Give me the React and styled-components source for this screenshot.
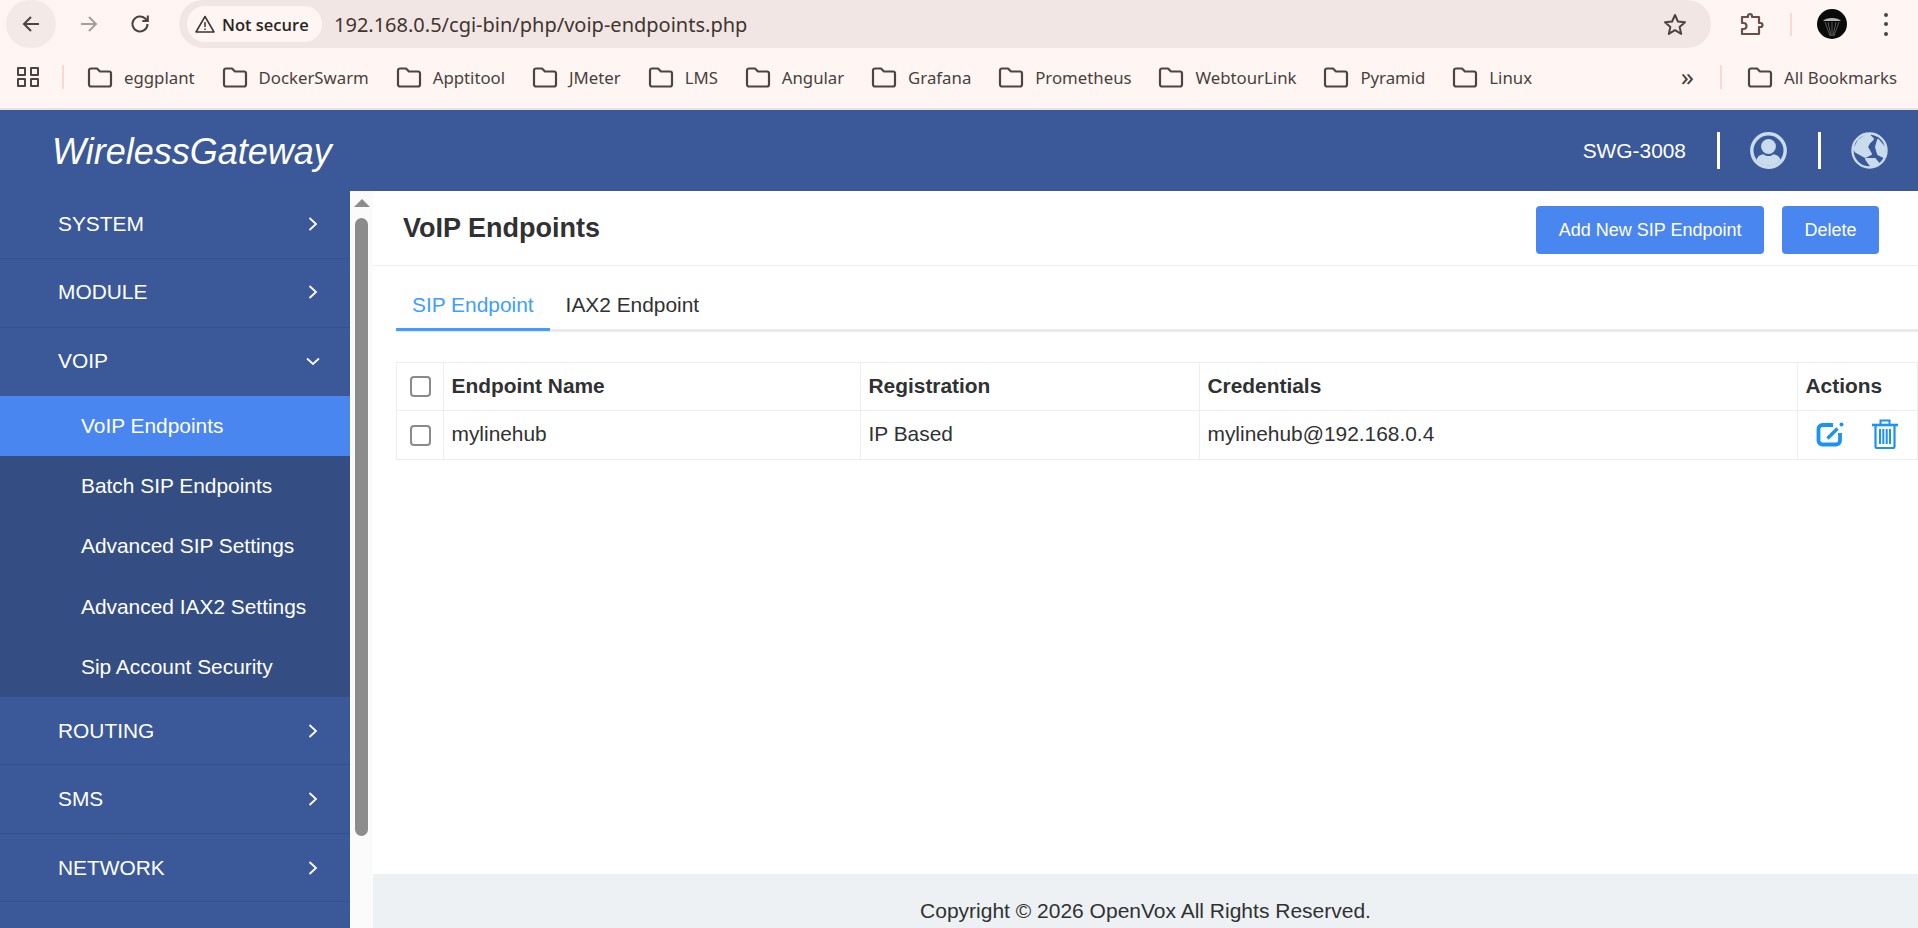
import React from 'react';
import styled, { createGlobalStyle } from 'styled-components';

const GlobalStyle = createGlobalStyle`
  html, body {
    margin: 0;
    height: 100%;
    overflow: hidden;
    background: #fff;
    font-family: "Liberation Sans", Arial, sans-serif;
  }
  * { box-sizing: border-box; }
`;

const bookmarks = ['eggplant', 'DockerSwarm', 'Apptitool', 'JMeter', 'LMS', 'Angular', 'Grafana', 'Prometheus', 'WebtourLink', 'Pyramid', 'Linux'];
const subItems = ['VoIP Endpoints', 'Batch SIP Endpoints', 'Advanced SIP Settings', 'Advanced IAX2 Settings', 'Sip Account Security'];

const FolderIcon = () => (
  <svg width="26" height="22" viewBox="0 0 26 22" fill="none" stroke="#4f4240" strokeWidth="2.2" strokeLinejoin="round">
    <path d="M2 4.5a2 2 0 0 1 2-2h6l3 3h9a2 2 0 0 1 2 2v11a2 2 0 0 1-2 2H4a2 2 0 0 1-2-2z" />
  </svg>
);

const Chevron = ({ down }) => (
  <svg width="16" height="16" viewBox="0 0 16 16" fill="none" stroke="#fff" strokeWidth="1.8">
    <path d={down ? 'M2 5.5l6 5.5 6-5.5' : 'M4.5 2l6.5 6-6.5 6'} />
  </svg>
);

const UserIcon = () => (
  <svg width="37" height="37" viewBox="0 0 37 37" fill="#c9dcee">
    <circle cx="18.5" cy="18.5" r="16.7" fill="none" stroke="#c9dcee" strokeWidth="3.4" />
    <circle cx="18.5" cy="14.5" r="7.4" />
    <path d="M6.500 28c1-3.800 4-5.500 7-5.800 1.500 1.300 3.200 1.800 5 1.800s3.500-.5 5-1.800c3 .3 6 2 7 5.800a15.500 15.500 0 0 1-24 0z" />
  </svg>
);

const GlobeIcon = () => (
  <svg width="37" height="37" viewBox="0 0 37 37" fill="#c9dcee" stroke="#c9dcee" strokeLinejoin="round">
    <circle cx="18.5" cy="18.5" r="17" fill="none" strokeWidth="2.400" />
    <path d="M3 17L8 8l9-6 5 5-4 4-2 4 4 7-6 3-9-5z" strokeWidth="2" />
    <path d="M15 27l9 0 4 5-8 2-3-4z" strokeWidth="2" />
    <path d="M27 8l7 8-1 9-6-3-2-7z" strokeWidth="2" />
  </svg>
);

const EditIcon = () => (
  <svg width="29" height="25" viewBox="0 0 29 25" fill="none" stroke="#1c92f2">
    <path d="M17 3H6.500a4 4 0 0 0-4 4v11.500a4 4 0 0 0 4 4H20a4 4 0 0 0 4-4V11" strokeWidth="3.800" />
    <path d="M11.500 16.500L21.500 6.500" strokeWidth="3.400" />
    <circle cx="25.500" cy="2.500" r="2" fill="#1c92f2" stroke="none" />
  </svg>
);

const TrashIcon = () => (
  <svg width="26" height="30" viewBox="0 0 26 30" fill="none" stroke="#1c92f2">
    <path d="M0 6h26" strokeWidth="2.600" />
    <path d="M8.500 5V1.500h9V5" strokeWidth="2" />
    <path d="M3.500 7v20.500a1.500 1.500 0 0 0 1.500 1.500h16a1.500 1.500 0 0 0 1.500-1.500V7" strokeWidth="2.200" />
    <path d="M8 10v15M11.300 10v15M14.700 10v15M18 10v15" strokeWidth="2" />
  </svg>
);

const BackArrow = ({ color }) => (
  <svg width="20" height="20" viewBox="0 0 20 20" fill="none" stroke={color} strokeWidth="2">
    <path d="M18 10H3M10 3l-7 7 7 7" />
  </svg>
);

export default function App() {
  return (
    <Page>
      <GlobalStyle />
      <Toolbar>
        <BackButton><BackArrow color="#4f4240" /></BackButton>
        <NavButton dim><Flip><BackArrow color="#a89d9b" /></Flip></NavButton>
        <NavButton>
          <svg width="22" height="22" viewBox="0 0 22 22" fill="none" stroke="#4f4240" strokeWidth="2.100">
            <path d="M18.500 11a7.500 7.500 0 1 1-2.300-5.400L18.500 8" />
            <path d="M18.800 2.500V8h-5.500" />
          </svg>
        </NavButton>
        <Omnibox>
          <SecurityChip>
            <svg width="20" height="18" viewBox="0 0 20 18" fill="none" stroke="#3c3230" strokeWidth="1.500" strokeLinejoin="round">
              <path d="M10 1.500L19 17H1z" />
              <path d="M10 7v5M10 13.500v1.500" />
            </svg>
            Not secure
          </SecurityChip>
          <UrlText>192.168.0.5/cgi-bin/php/voip-endpoints.php</UrlText>
          <StarSlot>
            <svg width="24" height="23" viewBox="0 0 24 23" fill="none" stroke="#4f4240" strokeWidth="2" strokeLinejoin="round">
              <path d="M12 2l2.900 6.500 7.100.7-5.400 4.700 1.600 7L12 17.200 5.800 20.900l1.600-7L2 9.200l7.100-.7z" />
            </svg>
          </StarSlot>
        </Omnibox>
        <ToolbarRight>
          <svg width="25" height="24" viewBox="0 0 25 24" fill="none" stroke="#6a4f49" strokeWidth="2.200" strokeLinejoin="round">
            <path d="M2 5h6V4a2 2 0 0 1 4 0v1h7v6h1.500a2 2 0 0 1 0 4H19v7H2v-5h1.500a3 3 0 0 0 0-6H2z" />
          </svg>
          <ToolbarDivider />
          <Avatar>
            <svg width="30" height="30" viewBox="0 0 30 30">
              <path d="M6 12c3-4 15-4 18 0z" fill="#b5b5b5" />
              <path d="M8 13l5 14M22 13l-5 14M15 13v14M11 13l3 14M19 13l-3 14" stroke="#6b6b6b" strokeWidth="0.800" />
            </svg>
          </Avatar>
          <Dots><span /><span /><span /></Dots>
        </ToolbarRight>
      </Toolbar>

      <BookmarksBar>
        <AppsIcon>
          <span /><span /><span /><span />
        </AppsIcon>
        <BarDivider />
        {bookmarks.map((name) => (
          <Bookmark key={name}>
            <FolderIcon />
            {name}
          </Bookmark>
        ))}
        <MoreBookmarks>»</MoreBookmarks>
        <BarDivider />
        <AllBookmarks>
          <FolderIcon />
          All Bookmarks
        </AllBookmarks>
      </BookmarksBar>

      <Header>
        <Logo>WirelessGateway</Logo>
        <HeaderRight>
          <Model>SWG-3008</Model>
          <HeaderDivider />
          <HeaderIcon><UserIcon /></HeaderIcon>
          <HeaderDivider />
          <HeaderIcon><GlobeIcon /></HeaderIcon>
        </HeaderRight>
      </Header>

      <Body>
        <Sidebar>
          <MenuItem>SYSTEM<Chevron /></MenuItem>
          <MenuItem>MODULE<Chevron /></MenuItem>
          <MenuItem open>VOIP<Chevron down /></MenuItem>
          <SubMenu>
            {subItems.map((item, i) => (
              <SubItem key={item} active={i === 0}>{item}</SubItem>
            ))}
          </SubMenu>
          <LowerItem>ROUTING<Chevron /></LowerItem>
          <LowerItem>SMS<Chevron /></LowerItem>
          <LowerItem>NETWORK<Chevron /></LowerItem>
        </Sidebar>

        <ScrollTrack>
          <ScrollUp />
          <ScrollThumb />
        </ScrollTrack>

        <Main>
          <TitleBar>
            <Title>VoIP Endpoints</Title>
            <Actions>
              <PrimaryButton>Add New SIP Endpoint</PrimaryButton>
              <PrimaryButton>Delete</PrimaryButton>
            </Actions>
          </TitleBar>

          <Tabs>
            <Tab active>SIP Endpoint</Tab>
            <Tab>IAX2 Endpoint</Tab>
          </Tabs>

          <Table>
            <thead>
              <tr>
                <CheckCell><Check /></CheckCell>
                <HeadCell style={{ width: 417 }}>Endpoint Name</HeadCell>
                <HeadCell style={{ width: 339 }}>Registration</HeadCell>
                <HeadCell style={{ width: 598 }}>Credentials</HeadCell>
                <HeadCell>Actions</HeadCell>
              </tr>
            </thead>
            <tbody>
              <tr>
                <CheckCell row><Check /></CheckCell>
                <Cell>mylinehub</Cell>
                <Cell>IP Based</Cell>
                <Cell>mylinehub@192.168.0.4</Cell>
                <Cell>
                  <IconRow>
                    <EditIcon />
                    <TrashIcon />
                  </IconRow>
                </Cell>
              </tr>
            </tbody>
          </Table>

          <Footer>Copyright © 2026 OpenVox All Rights Reserved.</Footer>
        </Main>
      </Body>
    </Page>
  );
}

const Page = styled.div`
  width: 1918px;
  height: 928px;
  display: flex;
  flex-direction: column;
  overflow: hidden;
`;

const Toolbar = styled.div`
  height: 48px;
  flex: none;
  display: flex;
  align-items: center;
  padding-left: 6px;
  background: #fff6f4;
`;

const BackButton = styled.div`
  width: 50px;
  height: 48px;
  border-radius: 25px;
  background: #f3e9e7;
  display: flex;
  align-items: center;
  justify-content: center;
`;

const NavButton = styled.div`
  width: 52px;
  height: 48px;
  margin-left: ${(p) => (p.dim ? '7px' : '-1px')};
  display: flex;
  align-items: center;
  justify-content: center;
`;

const Flip = styled.div`
  display: flex;
  transform: scaleX(-1);
`;

const Omnibox = styled.div`
  width: 1532px;
  height: 48px;
  margin-left: 13px;
  padding-left: 8px;
  border-radius: 24px;
  background: #f2e6e5;
  display: flex;
  align-items: center;
`;

const SecurityChip = styled.div`
  width: 135px;
  height: 36px;
  padding-left: 8px;
  border-radius: 18px;
  background: #fff6f4;
  display: flex;
  align-items: center;
  gap: 7px;
  font: 600 16.5px "Open Sans", sans-serif;
  color: #2c2422;
  white-space: nowrap;
`;

const UrlText = styled.div`
  margin-left: 12px;
  font: 400 20px "Noto Sans", sans-serif;
  color: #40352f;
`;

const StarSlot = styled.div`
  margin-left: auto;
  margin-right: 24px;
  display: flex;
`;

const ToolbarRight = styled.div`
  display: flex;
  align-items: center;
  margin-left: 29px;
`;

const ToolbarDivider = styled.div`
  width: 2px;
  height: 23px;
  margin: 0 25px 0 25px;
  background: #fbd9cf;
`;

const Avatar = styled.div`
  width: 30px;
  height: 30px;
  border-radius: 50%;
  background: #0a0a0a;
  overflow: hidden;
`;

const Dots = styled.div`
  display: flex;
  flex-direction: column;
  gap: 5.500px;
  margin-left: 37px;
  span {
    width: 4px;
    height: 4px;
    border-radius: 50%;
    background: #4f4240;
  }
`;

const BookmarksBar = styled.div`
  height: 62px;
  flex: none;
  display: flex;
  align-items: center;
  padding: 0 0 2px 17px;
  background: #fff6f4;
  border-bottom: 2px solid #e9e2e0;
  font: 400 16.8px "Noto Sans", sans-serif;
  color: #4a3f3d;
`;

const AppsIcon = styled.div`
  width: 22px;
  height: 20px;
  display: grid;
  grid-template-columns: 9px 9px;
  gap: 2px 4px;
  span {
    border: 2px solid #4f4240;
    border-radius: 1px;
  }
`;

const BarDivider = styled.div`
  width: 2px;
  height: 24px;
  margin: 0 23px 0 23px;
  background: #fbd9cf;
`;

const Bookmark = styled.div`
  display: flex;
  align-items: center;
  gap: 11px;
  margin-right: 26.900px;
  white-space: nowrap;
`;

const MoreBookmarks = styled.div`
  margin-left: auto;
  margin-right: 3px;
  padding-bottom: 2px;
  font-size: 26px;
  line-height: 24px;
`;

const AllBookmarks = styled(Bookmark)`
  margin-right: 21px;
  margin-left: 2px;
`;

const Header = styled.div`
  height: 81px;
  flex: none;
  display: flex;
  align-items: center;
  justify-content: space-between;
  padding: 0 30px 0 52px;
  background: #3b5998;
  color: #fff;
`;

const Logo = styled.div`
  padding-top: 2px;
  font-size: 36px;
  font-style: italic;
`;

const HeaderRight = styled.div`
  display: flex;
  align-items: center;
`;

const Model = styled.div`
  font-size: 20.900px;
  margin-right: 31px;
`;

const HeaderDivider = styled.div`
  width: 3px;
  height: 37px;
  background: #fff;
`;

const HeaderIcon = styled.div`
  display: flex;
  margin: 0 31px 0 30px;
  &:last-child {
    margin-right: 0;
  }
`;

const Body = styled.div`
  flex: 1;
  min-height: 0;
  display: flex;
`;

const Sidebar = styled.div`
  width: 350px;
  flex: none;
  background: #3b5998;
`;

const MenuItem = styled.div`
  height: 68.300px;
  display: flex;
  align-items: center;
  justify-content: space-between;
  padding: 0 29.500px ${(p) => (p.open ? '2px' : '1px')} 58px;
  font-size: 20.900px;
  color: #fff;
  border-bottom: ${(p) => (p.open ? 'none' : '1.500px solid #34508a')};
`;

const LowerItem = styled(MenuItem)`
  height: 68.500px;
  padding-bottom: 0;
`;

const SubMenu = styled.div`
  background: #344e84;
`;

const SubItem = styled.div`
  height: 60.200px;
  display: flex;
  align-items: center;
  padding-left: 81px;
  font-size: 20.900px;
  color: #fff;
  background: ${(p) => (p.active ? '#4a86f0' : 'transparent')};
`;

const ScrollTrack = styled.div`
  width: 23px;
  flex: none;
  background: #fbfbfb;
  display: flex;
  flex-direction: column;
  align-items: center;
`;

const ScrollUp = styled.div`
  width: 0;
  height: 0;
  margin-top: 8px;
  border-left: 8px solid transparent;
  border-right: 8px solid transparent;
  border-bottom: 8px solid #8c8c8c;
`;

const ScrollThumb = styled.div`
  width: 13px;
  height: 618px;
  margin-top: 11px;
  border-radius: 6.500px;
  background: #8c8c8c;
`;

const Main = styled.div`
  flex: 1;
  min-width: 0;
  display: flex;
  flex-direction: column;
  background: #fff;
`;

const TitleBar = styled.div`
  height: 75px;
  flex: none;
  display: flex;
  align-items: center;
  justify-content: space-between;
  padding: 0 39px 0 30px;
  border-bottom: 1.500px solid #ebeef5;
`;

const Title = styled.h1`
  margin: 0;
  font-size: 27px;
  font-weight: 700;
  color: #303133;
`;

const Actions = styled.div`
  display: flex;
  gap: 18px;
  margin-top: 4px;
`;

const PrimaryButton = styled.button`
  height: 48px;
  padding: 0 22.500px;
  border: none;
  border-radius: 4px;
  background: #4a86f0;
  color: #fff;
  font: 400 18px "Liberation Sans", Arial, sans-serif;
`;

const Tabs = styled.div`
  height: 66px;
  flex: none;
  margin-left: 23px;
  display: flex;
  align-items: flex-end;
  border-bottom: 3px solid #e8eaec;
`;

const Tab = styled.div`
  height: 47px;
  padding: 0 16px 2px;
  margin-bottom: -2px;
  display: flex;
  align-items: center;
  font-size: 20.900px;
  color: ${(p) => (p.active ? '#409eff' : '#303133')};
  border-bottom: 3px solid ${(p) => (p.active ? '#409eff' : 'transparent')};
`;

const Table = styled.table`
  width: 1522px;
  margin: 30px 0 0 23px;
  border-collapse: collapse;
  table-layout: fixed;
  color: #303133;
  font-size: 20.900px;
`;

const CheckCell = styled.td`
  width: 47px;
  height: ${(p) => (p.row ? '49px' : '48px')};
  border: 1.500px solid #ebeef5;
  padding: 0 0 0 13px;
`;

const Check = styled.div`
  width: 21px;
  height: 21px;
  border: 2px solid #8a8a8a;
  border-radius: 4px;
  background: #fff;
`;

const HeadCell = styled.th`
  border: 1.500px solid #ebeef5;
  padding: 0 8px 2px 7.500px;
  text-align: left;
  font-weight: 700;
`;

const Cell = styled.td`
  border: 1.500px solid #ebeef5;
  padding: 0 8px 2px 7.500px;
`;

const IconRow = styled.div`
  display: flex;
  align-items: center;
  gap: 27px;
  padding-left: 10px;
`;

const Footer = styled.div`
  margin-top: auto;
  height: 54px;
  flex: none;
  display: flex;
  align-items: center;
  justify-content: center;
  padding-top: 20px;
  background: #eef1f4;
  font-size: 21px;
  color: #303133;
`;
